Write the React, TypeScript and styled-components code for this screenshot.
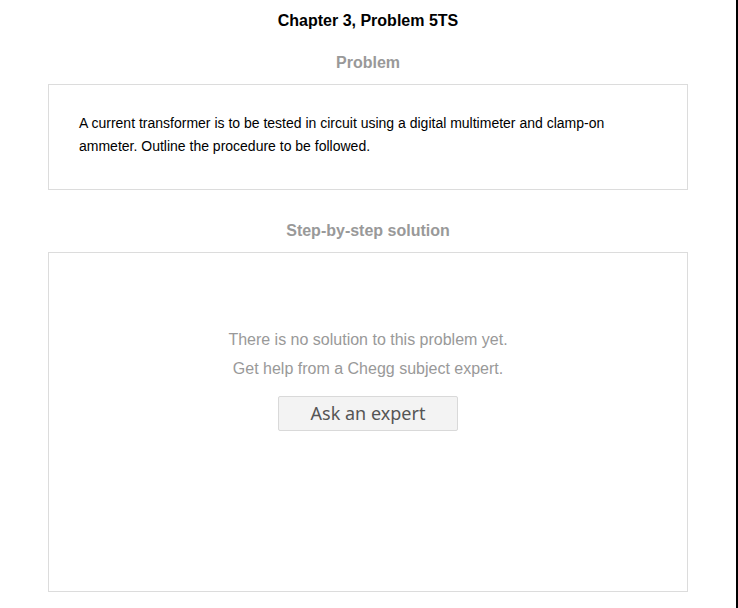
import styled, { createGlobalStyle } from 'styled-components'

const GlobalStyle = createGlobalStyle`
  html, body {
    margin: 0;
    padding: 0;
    background: #fff;
  }
  body {
    font-family: 'Liberation Sans', Arial, sans-serif;
  }
`

const Page = styled.div`
  width: 736px;
  min-height: 608px;
  border-right: 2px solid #000;
  box-sizing: content-box;
  padding-top: 11px;
  display: flex;
  flex-direction: column;
  align-items: center;
`

const Title = styled.h1`
  margin: 0 0 22px;
  font-size: 16px;
  line-height: 20px;
  font-weight: 700;
  color: #000;
`

const SectionHeading = styled.h2<{ $gap: number }>`
  margin: 0 0 ${(p) => p.$gap}px;
  font-size: 16px;
  line-height: 20px;
  font-weight: 700;
  color: #999;
`

const Card = styled.div`
  width: 640px;
  box-sizing: border-box;
  border: 1px solid #dcdcdc;
  background: #fff;
`

const ProblemCard = styled(Card)`
  padding: 27px 30px 31px;
  margin-bottom: 31px;
`

const ProblemText = styled.p`
  margin: 0;
  font-size: 14px;
  line-height: 23px;
  color: #000;
`

const SolutionCard = styled(Card)`
  height: 340px;
  padding-top: 72px;
  display: flex;
  flex-direction: column;
  align-items: center;
`

const EmptyText = styled.p`
  margin: 0;
  font-size: 16px;
  line-height: 29px;
  color: #999;
  text-align: center;
`

const AskButton = styled.button`
  margin-top: 13px;
  width: 180px;
  height: 35px;
  border: 1px solid #d9d9d9;
  border-radius: 2px;
  background: #f3f3f3;
  color: #555;
  font-family: 'Noto Sans', 'Open Sans', sans-serif;
  font-size: 18px;
  line-height: 33px;
  padding: 0;
  cursor: pointer;
`

export default function App() {
  return (
    <>
      <GlobalStyle />
      <Page>
        <Title>Chapter 3, Problem 5TS</Title>
        <SectionHeading $gap={11}>Problem</SectionHeading>
        <ProblemCard>
          <ProblemText>
            A current transformer is to be tested in circuit using a digital multimeter and clamp-on
            ammeter. Outline the procedure to be followed.
          </ProblemText>
        </ProblemCard>
        <SectionHeading $gap={11}>Step-by-step solution</SectionHeading>
        <SolutionCard>
          <EmptyText>
            There is no solution to this problem yet.
            <br />
            Get help from a Chegg subject expert.
          </EmptyText>
          <AskButton>Ask an expert</AskButton>
        </SolutionCard>
      </Page>
    </>
  )
}
